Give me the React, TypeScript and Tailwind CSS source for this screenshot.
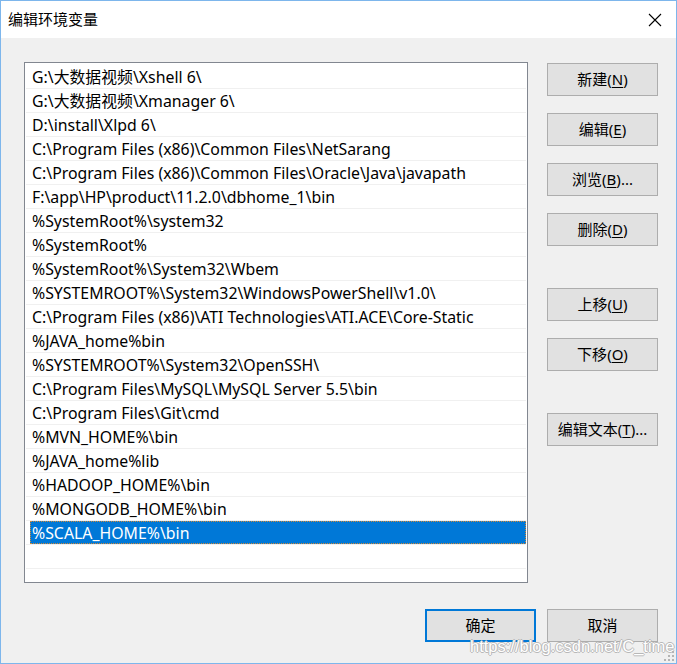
import React from "react";

const PATHS = [
  "G:\\大数据视频\\Xshell 6\\",
  "G:\\大数据视频\\Xmanager 6\\",
  "D:\\install\\Xlpd 6\\",
  "C:\\Program Files (x86)\\Common Files\\NetSarang",
  "C:\\Program Files (x86)\\Common Files\\Oracle\\Java\\javapath",
  "F:\\app\\HP\\product\\11.2.0\\dbhome_1\\bin",
  "%SystemRoot%\\system32",
  "%SystemRoot%",
  "%SystemRoot%\\System32\\Wbem",
  "%SYSTEMROOT%\\System32\\WindowsPowerShell\\v1.0\\",
  "C:\\Program Files (x86)\\ATI Technologies\\ATI.ACE\\Core-Static",
  "%JAVA_home%bin",
  "%SYSTEMROOT%\\System32\\OpenSSH\\",
  "C:\\Program Files\\MySQL\\MySQL Server 5.5\\bin",
  "C:\\Program Files\\Git\\cmd",
  "%MVN_HOME%\\bin",
  "%JAVA_home%lib",
  "%HADOOP_HOME%\\bin",
  "%MONGODB_HOME%\\bin",
  "%SCALA_HOME%\\bin",
];

const SELECTED = 19;

function Btn({ label, hot, tail = "", className = "" }: { label: string; hot: string; tail?: string; className?: string }) {
  return (
    <button className={"w-[111px] h-[33px] bg-[#e1e1e1] border border-[#adadad] text-[15px] text-black flex items-center justify-center " + className}>
      <span>
        {label}(<span className="underline underline-offset-2">{hot}</span>){tail}
      </span>
    </button>
  );
}

export default function App() {
  return (
    <div
      className="relative w-[677px] h-[664px] border border-[#7db6ec] bg-[#f0f0f0] overflow-hidden flex flex-col"
      style={{ fontFamily: '"Noto Sans", "Noto Sans CJK SC", sans-serif' }}
    >
      {/* title bar */}
      <div className="h-[37px] bg-white flex items-center justify-between shrink-0">
        <span className="ml-[7px] text-[15px] text-black" style={{ fontFamily: '"Noto Sans CJK SC", sans-serif' }}>编辑环境变量</span>
        <svg width="14" height="14" viewBox="0 0 14 14" className="mr-[14px]">
          <path d="M1 1 L13 13 M13 1 L1 13" stroke="#000" strokeWidth="1.1" fill="none" />
        </svg>
      </div>

      {/* body */}
      <div className="flex pl-[23px] pt-[24px] gap-[19px]">
        {/* list */}
        <div className="w-[504px] h-[521px] bg-white border border-[#828790] pt-[2px] px-[1px] shrink-0">
          {PATHS.map((p, i) => (
            <div key={p} className="h-[24px] border-b border-[#f0f0f0]">
              <div
                className={
                  "h-[23px] ml-[4px] pl-[2px] pt-[2px] flex items-center text-[15.85px] whitespace-nowrap leading-none " +
                  (i === SELECTED ? "bg-[#0078d7] text-white outline outline-1 outline-dotted outline-[#d08a3a] -outline-offset-1" : "text-black")
                }
              >
                {p}
              </div>
            </div>
          ))}
          <div className="h-[24px] border-b border-[#f0f0f0]" />
        </div>

        {/* buttons */}
        <div className="flex flex-col pt-[1px]">
          <Btn label="新建" hot="N" />
          <Btn label="编辑" hot="E" className="mt-[17px]" />
          <Btn label="浏览" hot="B" tail="..." className="mt-[17px]" />
          <Btn label="删除" hot="D" className="mt-[17px]" />
          <Btn label="上移" hot="U" className="mt-[42px]" />
          <Btn label="下移" hot="O" className="mt-[17px]" />
          <Btn label="编辑文本" hot="T" tail="..." className="mt-[42px]" />
        </div>
      </div>

      {/* footer */}
      <div className="flex justify-end gap-[11px] pr-[18px] mt-[26px]">
        <button className="w-[111px] h-[33px] bg-[#e1e1e1] border-2 border-[#0078d7] text-[15px] text-black">确定</button>
        <button className="w-[111px] h-[33px] bg-[#e1e1e1] border border-[#adadad] text-[15px] text-black">取消</button>
      </div>

      {/* watermark */}
      <div
        className="absolute left-[469px] top-[633px] text-[16.5px] text-white [text-shadow:1px_0_0_#b8b8b8,-1px_0_0_#b8b8b8,0_1px_0_#b8b8b8,0_-1px_0_#b8b8b8]"
        style={{ fontFamily: '"Liberation Sans", Arial, sans-serif' }}
      >
        https://blog.csdn.net/C_time
      </div>

      {/* resize grip */}
      <svg width="12" height="12" viewBox="0 0 12 12" className="absolute right-[1px] bottom-[1px]">
        {[
          [9, 1], [9, 5], [5, 5], [9, 9], [5, 9], [1, 9],
        ].map(([x, y]) => (
          <rect key={`${x}-${y}`} x={x} y={y} width="2" height="2" fill="#b4b4b4" />
        ))}
      </svg>
    </div>
  );
}
